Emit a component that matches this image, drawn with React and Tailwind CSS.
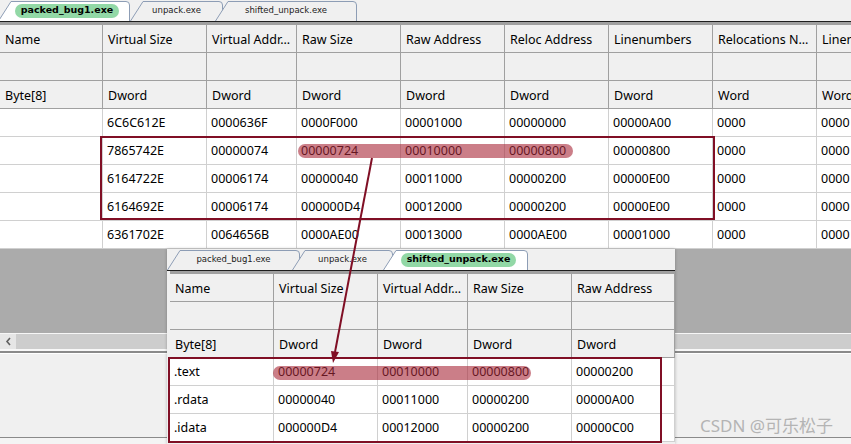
const mainCols = ["w-[103px]", "w-[104px]", "w-[90px]", "w-[104px]", "w-[104px]", "w-[104px]", "w-[104px]", "w-[104px]", "w-[104px]"];
const mainNames = ["Name", "Virtual Size", "Virtual Addr...", "Raw Size", "Raw Address", "Reloc Address", "Linenumbers", "Relocations N...", "Linenumbers"];
const mainTypes = ["Byte[8]", "Dword", "Dword", "Dword", "Dword", "Dword", "Dword", "Word", "Word"];
const mainRows = [
  ["", "6C6C612E", "0000636F", "0000F000", "00001000", "00000000", "00000A00", "0000", "0000"],
  ["", "7865742E", "00000074", "00000724", "00010000", "00000800", "00000800", "0000", "0000"],
  ["", "6164722E", "00006174", "00000040", "00011000", "00000200", "00000E00", "0000", "0000"],
  ["", "6164692E", "00006174", "000000D4", "00012000", "00000200", "00000E00", "0000", "0000"],
  ["", "6361702E", "0064656B", "0000AE00", "00013000", "0000AE00", "00001000", "0000", "0000"],
];

const subCols = ["w-[104px]", "w-[104px]", "w-[90px]", "w-[104px]", "w-[103px]"];
const subNames = ["Name", "Virtual Size", "Virtual Addr...", "Raw Size", "Raw Address"];
const subTypes = ["Byte[8]", "Dword", "Dword", "Dword", "Dword"];
const subRows = [
  [".text", "00000724", "00010000", "00000800", "00000200"],
  [".rdata", "00000040", "00011000", "00000200", "00000A00"],
  [".idata", "000000D4", "00012000", "00000200", "00000C00"],
];

const font = { fontFamily: '"Noto Sans", "Open Sans", sans-serif' };

function Tab({ w, label, selected, className }) {
  const d = `M0.5 21 L13 1.5 L${w - 4} 1.5 Q${w - 0.5} 1.5 ${w - 0.5} 5 L${w - 0.5} 21`;
  return (
    <div className={`relative h-[21px] shrink-0 flex items-center justify-center ${className}`}>
      <svg className="absolute inset-0" width={w} height={21} viewBox={`0 0 ${w} 21`}>
        <path d={d} fill={selected ? "#ffffff" : "#f0f0f0"} stroke="#8d9db5" strokeWidth="1" />
      </svg>
      {selected ? (
        <span className="relative ml-[6px] h-[14px] px-[6px] rounded-full bg-[#92d8a6] flex items-center text-[9.5px] font-bold text-black" style={{ fontFamily: '"DejaVu Sans", sans-serif' }}>
          {label}
        </span>
      ) : (
        <span className="relative text-[8.5px] text-[#222]" style={{ fontFamily: '"DejaVu Sans", sans-serif' }}>
          {label}
        </span>
      )}
    </div>
  );
}

function Grid({ cols, names, types, rows }) {
  return (
    <div className="flex flex-col text-[12.5px] text-black" style={font}>
      <div className="flex">
        {names.map((n, i) => (
          <div key={i} className={`${cols[i]} shrink-0 h-[28px] bg-[#f0f0f0] border-r border-b border-[#a0a0a0] pl-[5px] pt-[4px] flex items-center whitespace-nowrap overflow-hidden`}>{n}</div>
        ))}
      </div>
      <div className="flex">
        {names.map((n, i) => (
          <div key={i} className={`${cols[i]} shrink-0 h-[28px] bg-[#f0f0f0] border-r border-b border-[#a0a0a0]`}></div>
        ))}
      </div>
      <div className="flex">
        {types.map((t, i) => (
          <div key={i} className={`${cols[i]} shrink-0 h-[28px] bg-[#f0f0f0] border-r border-b border-[#a0a0a0] pl-[5px] pt-[4px] flex items-center whitespace-nowrap overflow-hidden`}>{t}</div>
        ))}
      </div>
      {rows.map((r, ri) => (
        <div key={ri} className="flex">
          {r.map((c, i) => (
            <div key={i} className={`${cols[i]} shrink-0 h-[28px] bg-white border-r border-b border-[#d0d0d0] pl-[4px] pt-[2px] flex items-center whitespace-nowrap`}>{c}</div>
          ))}
        </div>
      ))}
    </div>
  );
}

export default function App() {
  return (
    <div className="relative w-[851px] h-[444px] overflow-hidden bg-[#f0f0f0] flex flex-col">
      {/* main window tabs */}
      <div className="flex h-[21px] bg-[#f0f0f0]">
        <div className="flex -ml-[2px]">
          <Tab w={132} label="packed_bug1.exe" selected className="w-[132px] z-10" />
          <Tab w={93} label="unpack.exe" className="w-[93px]" />
          <Tab w={142} label="shifted_unpack.exe" className="w-[142px] -ml-[8px]" />
        </div>
      </div>
      <div className="h-[1px] bg-[#1e1e1e]"></div>
      <div className="h-[3px] bg-[#a0a0a0]"></div>
      <Grid cols={mainCols} names={mainNames} types={mainTypes} rows={mainRows} />

      <div className="flex-1 bg-[#ababab] flex flex-col">
        <div className="h-[84px]"></div>
        <div className="h-[1px] bg-[#f6f6f6]"></div>
        <div className="h-[15px] flex bg-[#cdcdcd]">
          <div className="w-[16px] bg-[#e6e6e6] flex items-center justify-center">
            <svg width="7" height="9" viewBox="0 0 7 9">
              <path d="M5 1 L2 4.5 L5 8" fill="none" stroke="#606060" strokeWidth="1.6" />
            </svg>
          </div>
        </div>
        <div className="h-[2px] bg-[#f8f8f8]"></div>
        <div className="h-[2px] bg-[#8a8a8a]"></div>
        <div className="h-[1px] bg-white"></div>
        <div className="flex-1 bg-[#f0f0f0] border-b border-[#8a8a8a]"></div>
        <div className="h-[6px] bg-[#f4f4f4]"></div>
      </div>

      {/* pasted second window */}
      <div className="absolute left-[167px] top-[249px] w-[508px] h-[195px] bg-[#f0f0f0] flex flex-col overflow-hidden shadow-[0_0_3px_rgba(0,0,0,0.25)]">
        <div className="flex h-[21px]">
          <Tab w={133} label="packed_bug1.exe" className="w-[133px]" />
          <Tab w={101} label="unpack.exe" className="w-[101px] -ml-[8px]" />
          <Tab w={145} label="shifted_unpack.exe" selected className="w-[145px] -ml-[10px] z-10" />
        </div>
        <div className="h-[1px] bg-[#1e1e1e]"></div>
        <div className="h-[3px] bg-[#a0a0a0] ml-[3px]"></div>
        <div className="pl-[3px]">
          <Grid cols={subCols} names={subNames} types={subTypes} rows={subRows} />
        </div>
      </div>

      {/* annotations */}
      <div className="absolute left-[298px] top-[144px] w-[275px] h-[14px] rounded-full bg-[rgba(168,40,56,0.6)]"></div>
      <div className="absolute left-[273px] top-[366px] w-[258px] h-[14px] rounded-full bg-[rgba(168,40,56,0.6)]"></div>
      <div className="absolute left-[100px] top-[136px] w-[615px] h-[84px] border-2 border-[#800f25]"></div>
      <div className="absolute left-[168px] top-[357px] w-[494px] h-[86px] border-2 border-[#800f25]"></div>
      <svg className="absolute inset-0 pointer-events-none" width="851" height="444" viewBox="0 0 851 444">
        <line x1="372" y1="158" x2="335" y2="352" stroke="#800f25" strokeWidth="2" />
        <polygon points="333,363 339,352 331,351" fill="#800f25" />
      </svg>

      <div className="absolute left-[700px] top-[413px] text-[17px] text-[#b4b4b4] whitespace-nowrap" style={{ fontFamily: '"Noto Sans", "Noto Sans CJK SC", sans-serif' }}>
        CSDN @可乐松子
      </div>
    </div>
  );
}
